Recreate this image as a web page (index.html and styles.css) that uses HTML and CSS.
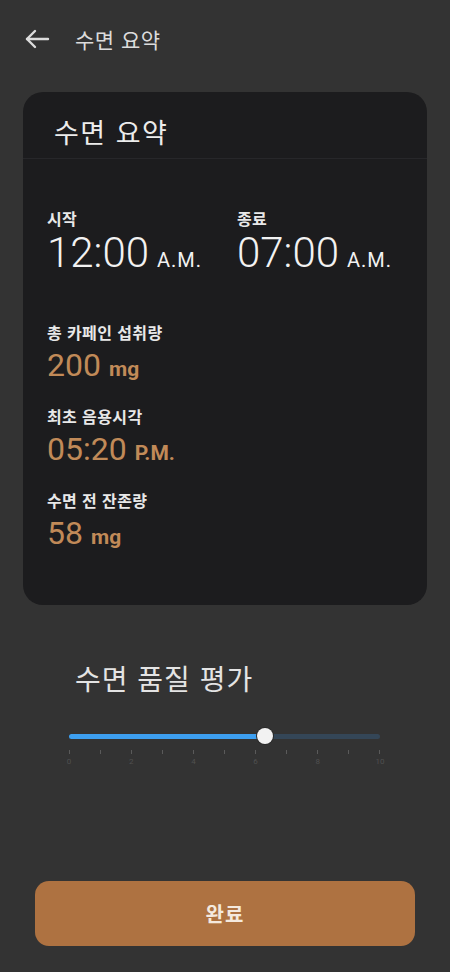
FILE: index.html
```html
<!DOCTYPE html>
<html lang="ko">
<head>
<meta charset="utf-8">
<title>수면 요약</title>
<link rel="stylesheet" href="styles.css">
</head>
<body>
<div class="page">
  <header class="header">
    <svg class="back" width="26" height="22" viewBox="0 0 26 22" fill="none" stroke="#dddddd" stroke-width="2.4" stroke-linecap="round" stroke-linejoin="round">
      <path d="M24 11H3"/>
      <path d="M11 3L3 11L11 19"/>
    </svg>
    <span class="header-title">수면 요약</span>
  </header>

  <section class="card">
    <div class="card-head">수면 요약</div>
    <div class="card-body">
      <div class="times">
        <div class="time">
          <div class="label">시작</div>
          <div class="time-val">12:00<span class="ampm">A.M.</span></div>
        </div>
        <div class="time">
          <div class="label">종료</div>
          <div class="time-val">07:00<span class="ampm">A.M.</span></div>
        </div>
      </div>
      <div class="stats">
        <div class="stat">
          <div class="label">총 카페인 섭취량</div>
          <div class="stat-val">200<span class="unit">mg</span></div>
        </div>
        <div class="stat">
          <div class="label">최초 음용시각</div>
          <div class="stat-val">05:20<span class="unit">P.M.</span></div>
        </div>
        <div class="stat">
          <div class="label">수면 전 잔존량</div>
          <div class="stat-val">58<span class="unit">mg</span></div>
        </div>
      </div>
    </div>
  </section>

  <section class="rating">
    <div class="rating-title">수면 품질 평가</div>
    <div class="slider">
      <div class="track">
        <div class="track-active" style="width:63%"></div>
        <div class="track-rest"></div>
      </div>
      <div class="thumb" style="left:63%"></div>
    </div>
    <div class="ticks">
      <i></i><i></i><i></i><i></i><i></i><i></i><i></i><i></i><i></i><i></i><i></i>
    </div>
    <div class="tick-labels">
      <span>0</span><span>2</span><span>4</span><span>6</span><span>8</span><span>10</span>
    </div>
  </section>

  <button class="done">완료</button>
</div>
</body>
</html>
```

FILE: styles.css
```css
* { box-sizing: border-box; }
html, body { margin: 0; padding: 0; }
body {
  background: #333333;
  font-family: "Noto Sans CJK KR", "Noto Sans", sans-serif;
  color: #e6e6e6;
}
.page {
  height: 972px;
  display: flex;
  flex-direction: column;
}
.header {
  height: 78px;
  display: flex;
  align-items: center;
  padding-left: 24px;
  gap: 25px;
}
.back { display: block; }
.header-title {
  font-size: 21px;
  line-height: 28px;
  letter-spacing: 0.5px;
  color: #dcdcdc;
}
.card {
  margin: 14px 23px 0;
  height: 513px;
  background: #1c1c1e;
  border-radius: 20px;
}
.card-head {
  padding: 22px 0 8px 31px;
  font-size: 27px;
  line-height: 36px;
  letter-spacing: 1.5px;
  color: #ececec;
  border-bottom: 1px solid #27272a;
}
.card-body {
  padding: 49px 0 0 24px;
}
.times {
  display: grid;
  grid-template-columns: 190px auto;
}
.label {
  font-size: 16px;
  line-height: 20px;
  letter-spacing: 0.4px;
  font-weight: 700;
  color: #e8e8e8;
}
.time-val {
  margin-top: 3px;
  font-family: Roboto, "Noto Sans", sans-serif;
  font-weight: 300;
  font-size: 42px;
  line-height: 44px;
  height: 44px;
  color: #f2f2f2;
  white-space: nowrap;
}
.ampm {
  font-size: 20px;
  font-weight: 400;
  line-height: 1;
  margin-left: 8px;
  letter-spacing: 1px;
}
.stats {
  margin-top: 47px;
  display: flex;
  flex-direction: column;
  gap: 22px;
}
.stat-val {
  margin-top: 4px;
  font-family: Roboto, "Noto Sans", sans-serif;
  font-size: 32px;
  line-height: 38px;
  height: 38px;
  color: #c18a58;
  white-space: nowrap;
}
.unit {
  font-size: 21px;
  font-weight: 700;
  line-height: 1;
  margin-left: 8px;
}
.rating {
  margin-top: 55px;
  padding-left: 69px;
}
.rating-title {
  padding-left: 6px;
  font-size: 28px;
  line-height: 36px;
  letter-spacing: 1px;
  color: #e4e4e4;
}
.slider {
  margin-top: 30px;
  width: 311px;
  height: 20px;
  position: relative;
  display: flex;
  align-items: center;
}
.track {
  width: 100%;
  height: 5px;
  display: flex;
}
.track-active {
  background: #3d9ff0;
  border-radius: 3px 0 0 3px;
}
.track-rest {
  flex: 1;
  background: #344657;
  border-radius: 0 3px 3px 0;
}
.thumb {
  position: absolute;
  top: 2px;
  width: 16px;
  height: 16px;
  margin-left: -8px;
  border-radius: 50%;
  background: #f2f2f2;
  box-shadow: 0 0 0 1px #2a2a2a;
}
.ticks {
  width: 311px;
  margin-top: 4px;
  height: 4px;
  display: flex;
  justify-content: space-between;
}
.ticks i {
  display: block;
  width: 1px;
  height: 4px;
  background: #5a5a5a;
}
.tick-labels {
  width: 323px;
  margin-left: -6px;
  margin-top: 3px;
  display: flex;
  justify-content: space-between;
  font-family: Roboto, sans-serif;
  font-size: 8px;
  line-height: 10px;
  color: #505050;
}
.tick-labels span {
  width: 12px;
  text-align: center;
}
.done {
  margin: auto 35px 26px;
  height: 65px;
  border: none;
  border-radius: 14px;
  background: #ae7241;
  color: #f4e9de;
  font-family: "Noto Sans CJK KR", sans-serif;
  font-size: 20px;
  letter-spacing: 1px;
  font-weight: 700;
}
```
